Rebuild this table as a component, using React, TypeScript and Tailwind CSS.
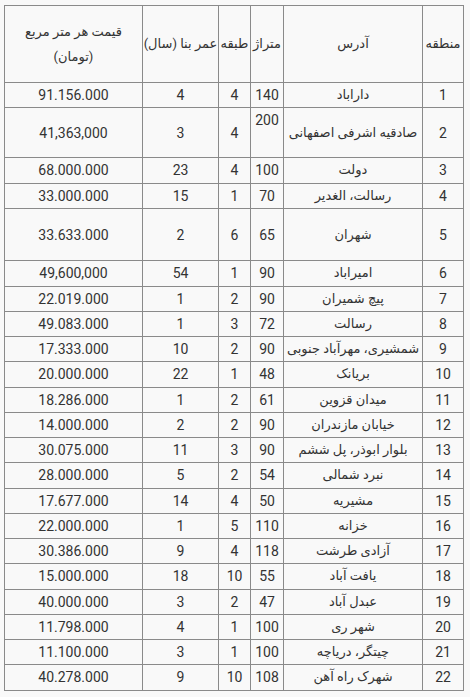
import React from 'react';

type Row = { n: string; addr: string; area: string; floor: string; age: string; price: string };

const rows: Row[] = [
  { n: '1', addr: 'داراباد', area: '140', floor: '4', age: '4', price: '91.156.000' },
  { n: '2', addr: 'صادقیه اشرفی اصفهانی', area: '200', floor: '4', age: '3', price: '41,363,000' },
  { n: '3', addr: 'دولت', area: '100', floor: '4', age: '23', price: '68.000.000' },
  { n: '4', addr: 'رسالت، الغدیر', area: '70', floor: '1', age: '15', price: '33.000.000' },
  { n: '5', addr: 'شهران', area: '65', floor: '6', age: '2', price: '33.633.000' },
  { n: '6', addr: 'امیراباد', area: '90', floor: '1', age: '54', price: '49,600,000' },
  { n: '7', addr: 'پیچ شمیران', area: '90', floor: '2', age: '1', price: '22.019.000' },
  { n: '8', addr: 'رسالت', area: '72', floor: '3', age: '1', price: '49.083.000' },
  { n: '9', addr: 'شمشیری، مهرآباد جنوبی', area: '90', floor: '2', age: '10', price: '17.333.000' },
  { n: '10', addr: 'بریانک', area: '48', floor: '1', age: '22', price: '20.000.000' },
  { n: '11', addr: 'میدان قزوین', area: '61', floor: '2', age: '1', price: '18.286.000' },
  { n: '12', addr: 'خیابان مازندران', area: '90', floor: '2', age: '2', price: '14.000.000' },
  { n: '13', addr: 'بلوار ابوذر، پل ششم', area: '90', floor: '3', age: '11', price: '30.075.000' },
  { n: '14', addr: 'نبرد شمالی', area: '54', floor: '2', age: '5', price: '28.000.000' },
  { n: '15', addr: 'مشیریه', area: '50', floor: '4', age: '14', price: '17.677.000' },
  { n: '16', addr: 'خزانه', area: '110', floor: '5', age: '1', price: '22.000.000' },
  { n: '17', addr: 'آزادی طرشت', area: '118', floor: '4', age: '9', price: '30.386.000' },
  { n: '18', addr: 'یافت آباد', area: '55', floor: '10', age: '18', price: '15.000.000' },
  { n: '19', addr: 'عبدل آباد', area: '47', floor: '2', age: '3', price: '40.000.000' },
  { n: '20', addr: 'شهر ری', area: '100', floor: '1', age: '4', price: '11.798.000' },
  { n: '21', addr: 'چیتگر، دریاچه', area: '100', floor: '1', age: '3', price: '11.100.000' },
  { n: '22', addr: 'شهرک راه آهن', area: '108', floor: '10', age: '9', price: '40.278.000' },
];

const cell = 'border border-[#8a8a8a] p-0 text-center align-middle';

const App: React.FC = () => {
  return (
    <div className="min-h-[697px] w-[470px] bg-[#f9f9f9] pt-[5px] pl-[4px] text-[14px] leading-[20px] text-[#333] font-['Roboto','DejaVu_Sans',sans-serif]">
      <table dir="rtl" className="w-[459px] table-fixed border-collapse">
        <colgroup>
          <col className="w-[41px]" />
          <col className="w-[139px]" />
          <col className="w-[33px]" />
          <col className="w-[32px]" />
          <col className="w-[76px]" />
          <col className="w-[138px]" />
        </colgroup>
        <thead>
          <tr className="h-[77px]">
            <th className={`${cell} font-normal text-[13px]`}>منطقه</th>
            <th className={`${cell} font-normal text-[13px]`}>آدرس</th>
            <th className={`${cell} font-normal text-[13px]`}>متراژ</th>
            <th className={`${cell} font-normal text-[13px]`}>طبقه</th>
            <th className={`${cell} font-normal text-[13px] whitespace-nowrap`}>عمر بنا (سال)</th>
            <th className={`${cell} font-normal text-[13px] leading-[25px]`}>
              قیمت هر متر مربع
              <br />
              (تومان)
            </th>
          </tr>
        </thead>
        <tbody>
          {rows.map((r) => {
            const tall = r.n === '2' ? 'h-[50px]' : r.n === '5' ? 'h-[52.5px]' : 'h-[25.25px]';
            return (
              <tr key={r.n} className={tall}>
                <td className={cell}>{r.n}</td>
                <td className={`${cell} text-[13px] whitespace-nowrap`}>{r.addr}</td>
                <td className={r.n === '2' ? `${cell} !align-top pt-[2px]` : cell}>{r.area}</td>
                <td className={cell}>{r.floor}</td>
                <td className={cell}>{r.age}</td>
                <td className={cell}>{r.price}</td>
              </tr>
            );
          })}
        </tbody>
      </table>
    </div>
  );
};

export default App;
